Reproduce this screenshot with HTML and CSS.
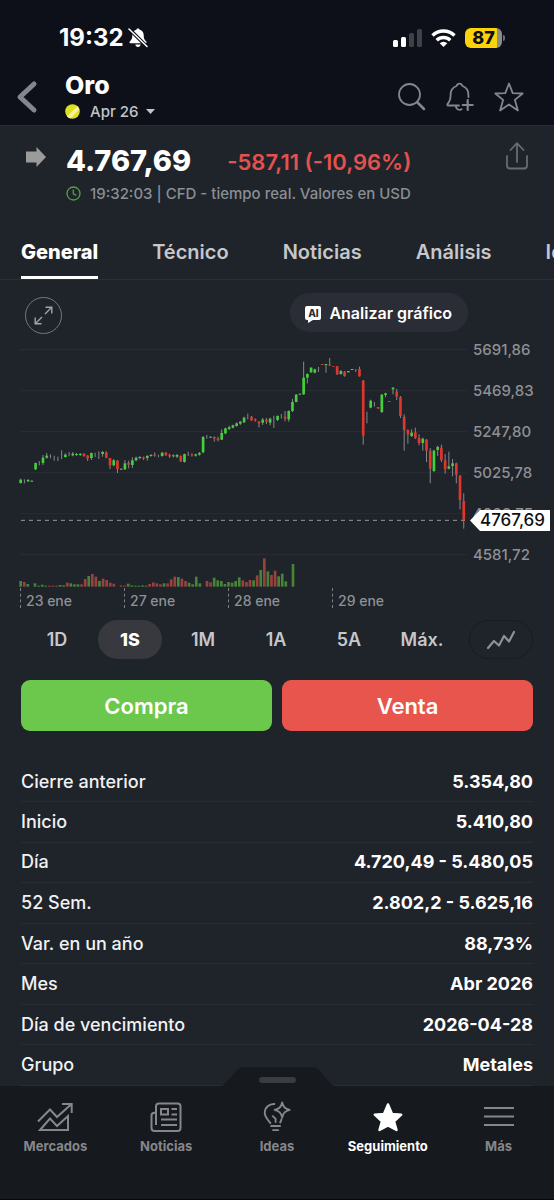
FILE: index.html
```html
<!DOCTYPE html>
<html lang="es">
<head>
<meta charset="utf-8">
<meta name="viewport" content="width=device-width, initial-scale=1">
<title>Oro</title>
<link rel="stylesheet" href="styles.css">
</head>
<body>
<div class="app">
  <div class="top">
    <div class="status">
      <div class="status-left">
        <span class="clock">19:32</span>
        <svg class="mute" viewBox="0 0 20 20" aria-hidden="true">
          <path fill="#fff" d="M10 .5c1 0 1.500 .6 1.700 1.300 2.700.8 4 2.900 4 5.400 0 3.600.8 4.600 2.500 6.300.6.700.3 1.800-.8 1.800H2.600c-1.100 0-1.400-1.100-.8-1.800 1.700-1.700 2.500-2.700 2.500-6.300 0-2.500 1.300-4.600 4-5.400C8.500 1.100 9 .5 10 .5zM7.300 16.500h5.400c-.2 1.500-1.300 2.400-2.700 2.400s-2.500-.9-2.700-2.400z"/>
          <path stroke="#0d1018" stroke-width="3.600" d="M1 .8l18 18"/>
          <path stroke="#fff" stroke-width="1.500" stroke-linecap="round" d="M1 1l18 17.500"/>
        </svg>
      </div>
      <div class="status-right">
        <svg class="signal" viewBox="0 0 29 18" aria-hidden="true">
          <rect x="0" y="11" width="5" height="7" rx="1.500" fill="#fff"/>
          <rect x="8" y="8" width="5" height="10" rx="1.500" fill="#fff"/>
          <rect x="16" y="4" width="5" height="14" rx="1.500" fill="#3e4147"/>
          <rect x="24" y="0" width="5" height="18" rx="1.500" fill="#3e4147"/>
        </svg>
        <svg class="wifi" viewBox="0 0 25 18" aria-hidden="true" fill="none" stroke="#fff" stroke-width="3.400">
          <path d="M1.500 6.500a15.700 15.700 0 0 1 22 0"/>
          <path d="M5.700 11.200a9.800 9.800 0 0 1 13.600 0"/>
          <path fill="#fff" stroke="none" d="M12.500 18l-3.800-3.700a5.400 5.400 0 0 1 7.600 0z"/>
        </svg>
        <span class="battery"><span class="battery-level">87</span></span>
      </div>
    </div>
    <header class="header">
      <button class="icon-btn back" aria-label="Atrás">
        <svg width="22" height="34" viewBox="0 0 22 34"><path d="M18 4L4 17l14 13" fill="none" stroke="#83868d" stroke-width="5" stroke-linecap="round" stroke-linejoin="round"/></svg>
      </button>
      <div class="title">
        <h1>Oro</h1>
        <button class="contract">
          <svg width="15" height="15" viewBox="0 0 15 15" aria-hidden="true">
            <circle cx="7.500" cy="7.500" r="7.300" fill="#dfe01f"/>
            <path d="M2 12.400L12.400 2.200a7.300 7.300 0 0 1 2 3.200L5.500 14.500A7.300 7.300 0 0 1 2 12.400z" fill="#f7f3a0"/>
          </svg>
          <span>Apr 26</span>
          <svg width="9" height="5" viewBox="0 0 9 5" aria-hidden="true"><path d="M0 0h9L4.500 5z" fill="#c3c5ca"/></svg>
        </button>
      </div>
      <div class="actions">
        <button class="icon-btn" aria-label="Buscar">
          <svg width="30" height="30" viewBox="0 0 30 30" class="line"><circle cx="12.500" cy="12.500" r="10.500"/><path d="M20.500 20.500l6.500 6.500" stroke-width="2.600"/></svg>
        </button>
        <button class="icon-btn" aria-label="Crear alerta">
          <svg width="30" height="30" viewBox="0 0 30 30" class="line"><path d="M14 23.500H3.200c-1 0-1.200-1-.6-1.700C4.700 19.600 5.600 17.800 5.600 13c0-4.600 2.200-7.800 5.900-9 .5-1.500 1.600-2.300 3-2.300s2.500.8 3 2.300c3.700 1.200 5.900 4.400 5.900 9 0 .7 0 1.300.1 2M10.800 24.200c.4 2.200 1.800 3.600 3.900 3.600.8 0 1.500-.2 2-.5"/><path d="M22.700 18v10M17.700 23h10" stroke-width="2.200"/></svg>
        </button>
        <button class="icon-btn" aria-label="Favorito">
          <svg width="32" height="32" viewBox="0 0 32 32" class="line"><path d="M16 2.500l3.700 9.600 10 .4-7.800 6.400 3 10.600L16 23.500l-8.900 6 3-10.600-7.800-6.400 10-.4z"/></svg>
        </button>
      </div>
    </header>
  </div>

  <main>
    <section class="quote">
      <svg class="trend" width="22" height="20" viewBox="0 0 22 20" aria-hidden="true"><path d="M1 4.500h10.500V0L21 10l-9.500 10v-4.500H1z" fill="#9b9b9b"/></svg>
      <div class="quote-body">
        <div class="quote-line"><strong class="price">4.767,69</strong><span class="change">-587,11 (-10,96%)</span></div>
        <div class="quote-meta">
          <svg width="15" height="15" viewBox="0 0 15 15" aria-hidden="true" fill="none" stroke="#56a044" stroke-width="1.300"><circle cx="7.500" cy="7.500" r="6.500"/><path d="M7.300 3.500v4.400l3 1.400"/></svg>
          <span>19:32:03 | CFD - tiempo real. Valores en USD</span>
        </div>
      </div>
      <button class="icon-btn share" aria-label="Compartir">
        <svg width="24" height="30" viewBox="0 0 24 30" fill="none" stroke="#686b71" stroke-width="1.800" stroke-linecap="round" stroke-linejoin="round"><path d="M12 21V2.500M5.500 9L12 2.200 18.500 9M2 15v9.500c0 2 1 3 3 3h14c2 0 3-1 3-3V15"/></svg>
      </button>
    </section>

    <nav class="tabs" aria-label="Secciones">
      <a href="#general" class="tab active" aria-current="page">General</a>
      <a href="#tecnico" class="tab">Técnico</a>
      <a href="#noticias" class="tab">Noticias</a>
      <a href="#analisis" class="tab">Análisis</a>
      <a href="#ideas" class="tab">Ideas</a>
    </nav>

    <section class="chart">
      <div class="chart-tools">
        <button class="expand" aria-label="Ampliar gráfico">
          <svg width="19" height="19" viewBox="0 0 19 19" fill="none" stroke="#a3a5a9" stroke-width="1.400"><path d="M11 8l6.500-6.500M11.500 1.200h6.300v6.300M8 11l-6.500 6.500M1.200 11.500v6.300h6.300"/></svg>
        </button>
        <button class="analyze">
          <span class="ai">AI</span>
          Analizar gráfico
        </button>
      </div>
      <div class="chart-area">
        <div class="plot">
          <svg class="candles" viewBox="0 0 1341 744" preserveAspectRatio="none" role="img" aria-label="Gráfico de velas de una semana">
            <path class="grid" d="M0 29H1341M0 152H1341M0 275H1341M0 398H1341M0 521H1341M0 644H1341"/>
            <g id="volume"></g>
            <path class="last-line" d="M3 541H1335"/>
            <g id="series"></g>
          </svg>
          <div class="dates"><span>23 ene</span><span>27 ene</span><span>28 ene</span><span>29 ene</span></div>
        </div>
        <div class="axis">
          <span>5691,86</span><span>5469,83</span><span>5247,80</span><span>5025,78</span><span>4803,75</span><span>4581,72</span>
          <div class="tag">4767,69</div>
        </div>
      </div>
      <div class="ranges">
        <div class="range-list">
          <button>1D</button><button class="on" aria-pressed="true">1S</button><button>1M</button><button>1A</button><button>5A</button><button>Máx.</button>
        </div>
        <button class="style-btn" aria-label="Tipo de gráfico">
          <svg width="30" height="20" viewBox="0 0 30 20"><path d="M2 18l6-7 5 4.500 5-9.500 5 5.500L28 2" fill="none" stroke="#8f9195" stroke-width="2.200" stroke-linecap="round" stroke-linejoin="round"/></svg>
        </button>
      </div>
    </section>

    <div class="trade"><button class="buy">Compra</button><button class="sell">Venta</button></div>

    <div class="details">
      <table>
        <tr><th scope="row">Cierre anterior</th><td>5.354,80</td></tr>
        <tr><th scope="row">Inicio</th><td>5.410,80</td></tr>
        <tr><th scope="row">Día</th><td>4.720,49 - 5.480,05</td></tr>
        <tr><th scope="row">52 Sem.</th><td>2.802,2 - 5.625,16</td></tr>
        <tr><th scope="row">Var. en un año</th><td>88,73%</td></tr>
        <tr><th scope="row">Mes</th><td>Abr 2026</td></tr>
        <tr><th scope="row">Día de vencimiento</th><td>2026-04-28</td></tr>
        <tr><th scope="row">Grupo</th><td>Metales</td></tr>
      </table>
    </div>
  </main>

  <nav class="bottom" aria-label="Principal">
    <svg class="bump" width="116" height="20" viewBox="0 0 116 20" aria-hidden="true"><path d="M0 20C6 18 12 8 16 4q4-4 9-4h66q5 0 9 4c4 4 10 14 16 16z" fill="#16191e"/><rect x="39" y="10" width="37" height="6" rx="3" fill="#3b3c41"/></svg>
    <a href="#mercados">
      <svg width="36" height="32" viewBox="0 0 36 32" class="nav-line"><path d="M1 20.500L13 8.500l7 7.500L34 3.500M25 3h9.700v9M3 29L13 17.500l7 7.500 11-10v14z"/></svg>
      Mercados
    </a>
    <a href="#noticias-app">
      <svg width="32" height="32" viewBox="0 0 32 32" class="nav-line"><path d="M6 24V5.500C6 3.500 7 2.500 9 2.500h18.500c2 0 3 1 3 3V27c0 2-1 3-3 3h-23c-2 0-3-1-3-3V14.500c0-2 1-2.700 3-2.700H6M11 8h7v5.500h-7zM21.500 8H27M21.500 13.500H27M11 18.500h16M11 24h16"/></svg>
      Noticias
    </a>
    <a href="#ideas-app">
      <svg width="32" height="34" viewBox="0 0 32 34" class="nav-line"><path d="M14 3.200C7.500 2.500 3 7 3 12.500c0 5 3.500 7.500 6.500 11.500M21 18.500c-.2 2-1 3.500-2 5M9 26.500h11M11 31h7M11 15.500l3.500 3.500v4"/><path stroke-linejoin="round" d="M21.500 1.500c1.300 5 3 6.700 8 8-5 1.300-6.700 3-8 8-1.300-5-3-6.700-8-8 5-1.300 6.700-3 8-8z"/></svg>
      Ideas
    </a>
    <a href="#seguimiento" class="current" aria-current="page">
      <svg width="32" height="32" viewBox="0 0 32 32"><path d="M16 3.500l4 9.500 9.200.7-7.200 6.600 2.500 8.700L16 24.300 7.500 29l2.500-8.700-7.200-6.600L12 13z" fill="#fff" stroke="#fff" stroke-width="2.500" stroke-linejoin="round"/></svg>
      Seguimiento
    </a>
    <a href="#mas">
      <svg width="30" height="32" viewBox="0 0 30 32" class="nav-line"><path d="M0 7h30M0 15.500h30M0 24h30"/></svg>
      Más
    </a>
  </nav>
</div>
<script src="chart.js"></script>
</body>
</html>
```
FILE: chart.js
```js
// Each candle: direction (g up, r down, n flat), body top, body bottom, wick top, wick bottom.
const candles = `g 419 429 416 431|n 0 0 418 430|g 420 424 417 426|n 422 425 422 425|g 369 388 368 390|n 0 0 363 376|g 353 369 345 375|g 347 353 339 356|n 0 0 343 355|n 0 0 347 362
n 0 0 350 363|n 0 0 331 357|g 344 351 340 353|n 0 0 336 349|g 341 346 336 349|g 342 345 339 348|g 342 345 339 348|r 341 349 340 349|r 347 355 345 363|g 339 354 338 360
n 0 0 338 351|n 0 0 334 357|g 336 342 333 350|r 337 353 334 355|r 354 376 354 387|g 361 376 357 379|r 362 387 360 399|n 386 389 386 389|g 370 388 360 390|r 368 374 362 385
g 361 375 352 384|g 353 361 350 364|g 351 354 348 358|r 352 356 350 360|g 348 354 345 362|g 345 348 342 350|r 344 347 337 350|n 0 0 344 352|g 338 348 337 350|r 338 345 336 348
r 344 349 341 354|g 346 349 343 352|g 345 350 342 354|r 348 364 346 366|g 342 366 341 368|n 0 0 335 348|r 343 346 340 350|g 343 347 341 350|g 339 344 336 347|g 291 337 288 340
n 0 0 285 296|n 290 293 290 293|r 291 296 289 305|r 295 300 290 304|g 279 299 268 300|g 265 280 263 283|g 262 267 257 270|g 256 263 254 265|g 250 258 247 260|g 245 251 243 255
g 233 247 230 249|n 0 0 221 238|r 230 241 228 243|r 238 242 235 245|r 245 250 243 262|g 239 248 234 255|r 239 245 234 252|g 236 248 233 256|n 0 0 227 264|g 228 240 226 243
n 0 0 222 236|r 230 236 213 244|g 213 238 211 245|g 186 213 177 216|g 164 186 162 187|g 161 164 161 164|g 113 163 65 165|g 102 113 100 130|g 83 97 82 98|g 88 98 86 100
n 0 0 81 96|r 72 75 72 75|g 72 75 72 98|r 74 77 54 77|r 79 81 79 81|r 79 103 78 105|g 93 102 90 104|r 95 108 93 110|g 93 97 93 97|n 87 90 87 90
n 0 0 87 96|r 87 109 80 110|r 122 287 120 314|n 0 0 215 250|g 182 203 179 205|n 0 0 186 200|r 201 206 201 206|g 164 216 162 219|g 160 165 158 172|r 183 186 183 186
g 143 148 142 163|r 155 170 147 180|r 171 228 168 234|r 230 270 223 332|r 270 283 268 311|g 278 288 268 291|r 277 294 263 297|r 294 309 283 316|g 296 309 293 332|r 299 332 297 366
r 332 386 324 430|g 332 393 329 396|g 321 330 317 348|r 323 360 314 366|r 361 387 342 401|g 379 386 335 388|g 370 378 357 409|r 370 404 368 430|r 407 480 405 508|r 483 541 460 566`;

const volumes = `g17 r14 g8 g0 g10 g3 g6 g3 r3 r3 r3 g5 g4 r12 g10 g7 g7 r7 r23 g32 r38 r30 g17 r24 r20 r12 r9 g0 r4 r3
g9 g4 g3 g3 g4 g3 r8 r13 r10 r7 g10 r10 r22 r30 g29 r24 r17 g12 g7 g30 g10 g0 r17 r13 g27 g19 g17 g8 g14 g12
g17 g28 r19 r14 r20 g19 r34 g50 r85 g46 r35 r48 g31 g39 g16 g0 g68`;

const CANDLE_STEP = 11.17;
const VOLUME_STEP = 10.75;
const BASELINE = 740;
const colors = { g: "#45cf3b", r: "#e0372d", n: "#9a9ba0" };
const volumeColors = { g: "#478438", r: "#98413f" };

function rect(parent, x, y, width, height, fill) {
  const el = document.createElementNS("http://www.w3.org/2000/svg", "rect");
  Object.entries({ x, y, width, height, fill }).forEach(([k, v]) => el.setAttribute(k, v));
  parent.append(el);
}

const series = document.getElementById("series");
candles.split(/[|\n]/).forEach((row, i) => {
  const [dir, ...values] = row.split(" ");
  const [top, bottom, high, low] = values.map(Number);
  const x = 2 + i * CANDLE_STEP;
  rect(series, x - 1.5, high, 3, low - high, "#85878b");
  if (bottom) rect(series, x - 4, top, 8, bottom - top, colors[dir]);
});

const volume = document.getElementById("volume");
volumes.split(/\s+/).forEach((item, i) => {
  const height = Number(item.slice(1));
  rect(volume, i * VOLUME_STEP - 2, BASELINE - height, 8, height, volumeColors[item[0]]);
});
```
FILE: styles.css
```css
* { box-sizing: border-box; }

body {
  margin: 0;
  background: #1f232a;
  color: #fff;
  font-family: Inter, "Liberation Sans", sans-serif;
}

button {
  border: 0;
  padding: 0;
  background: none;
  color: inherit;
  font: inherit;
}

a { color: inherit; text-decoration: none; }
svg { display: block; flex: none; }

.app {
  display: flex;
  flex-direction: column;
  min-height: 100vh;
}

.top {
  background: #0d1018;
  border-bottom: 1px solid #282c32;
}

.status {
  display: flex;
  justify-content: space-between;
  align-items: center;
  height: 71px;
  padding: 4px 52px 0 59px;
}

.status-left, .status-right { display: flex; align-items: center; }
.status-left { gap: 4px; }
.status-right { gap: 9px; }
.clock { font-size: 24px; font-weight: 700; }
.mute { width: 20px; height: 20px; }
.signal { width: 29px; height: 18px; }
.wifi { width: 25px; height: 18px; }

.battery {
  position: relative;
  width: 37px;
  height: 20px;
  border-radius: 6px;
  background: linear-gradient(90deg, #fcd20b 87%, #8b8b8b 87%);
  color: #0d1018;
  text-align: center;
}

.battery::after {
  content: "";
  position: absolute;
  left: 100%;
  top: 7px;
  width: 2px;
  height: 6px;
  margin-left: 1px;
  border-radius: 0 2px 2px 0;
  background: #6c6e73;
}

.battery-level {
  display: block;
  font-size: 18px;
  font-weight: 800;
  line-height: 20px;
}

.header {
  display: flex;
  align-items: center;
  height: 54px;
  padding: 0 29px 3px 16px;
}

.icon-btn { display: grid; place-items: center; }
.title { flex: 1; padding-left: 27px; }
.title h1 { margin: 0; font-size: 25px; font-weight: 800; line-height: 30px; }

.contract {
  display: flex;
  align-items: center;
  gap: 8px;
  height: 23px;
  color: #c3c5ca;
  font-size: 15px;
  font-weight: 500;
}

.contract span { padding-left: 2px; }
.actions { display: flex; align-items: center; gap: 18px; }

.line {
  fill: none;
  stroke: #83868d;
  stroke-width: 1.8;
  stroke-linecap: round;
  stroke-linejoin: round;
}

.quote {
  display: flex;
  align-items: flex-start;
  padding: 15px 25px 0;
  height: 96px;
}

.trend { margin-top: 6px; }
.quote-body { flex: 1; padding-left: 19px; }
.quote-line { display: flex; align-items: center; gap: 36px; height: 38px; }
.price { font-size: 29px; font-weight: 800; }
.change { padding-top: 4px; color: #e2524e; font-size: 22px; font-weight: 600; }

.quote-meta {
  display: flex;
  align-items: center;
  gap: 9px;
  height: 28px;
  color: #8b8e93;
  font-size: 15px;
  font-weight: 500;
}

.tabs {
  display: flex;
  gap: 54px;
  height: 58px;
  padding-left: 21px;
  overflow: hidden;
  border-bottom: 1px solid #2b2f36;
}

.tab {
  border-bottom: 3px solid transparent;
  color: #c5c7cb;
  font-size: 20px;
  font-weight: 600;
  line-height: 60px;
}

.tab.active { border-color: #fff; color: #fff; font-weight: 800; }

.chart-tools {
  display: flex;
  justify-content: space-between;
  align-items: center;
  height: 60px;
  padding: 10px 86px 0 25px;
}

.expand {
  display: grid;
  place-items: center;
  width: 37px;
  height: 37px;
  border: 1px solid #75777c;
  border-radius: 50%;
}

.analyze {
  display: flex;
  align-items: center;
  gap: 8px;
  height: 39px;
  margin-bottom: 5px;
  padding: 0 16px 0 15px;
  border-radius: 20px;
  background: #2b2d36;
  font-size: 16px;
  font-weight: 600;
}

.ai {
  position: relative;
  width: 16px;
  height: 14px;
  border-radius: 2px;
  background: #fff;
  color: #2b2d36;
  font-size: 10px;
  font-weight: 800;
  line-height: 14px;
  text-align: center;
}

.ai::after {
  content: "";
  position: absolute;
  left: 3px;
  top: 100%;
  border-top: 3px solid #fff;
  border-right: 5px solid transparent;
}

.chart-area { display: flex; padding-left: 20px; }
.plot { flex: 1; min-width: 0; }
.candles { width: 100%; height: 248px; overflow: visible; }

.grid { fill: none; stroke: #2b2f35; stroke-width: 1px; vector-effect: non-scaling-stroke; }

.last-line {
  stroke: #9a9ba0;
  stroke-width: 1px;
  stroke-dasharray: 4 4;
  vector-effect: non-scaling-stroke;
}

.dates { display: flex; }

.dates span {
  flex: 0 0 104px;
  height: 20px;
  padding-left: 5px;
  border-left: 1px dashed #7d7f84;
  color: #8e9095;
  font-size: 14px;
  font-weight: 500;
  line-height: 25px;
}

.axis {
  position: relative;
  display: flex;
  flex-direction: column;
  width: 87px;
  height: 248px;
  margin-top: -11px;
  padding-left: 6px;
}

.axis span {
  flex: 0 0 41px;
  color: #8e9095;
  font-size: 15px;
  font-weight: 500;
  line-height: 41px;
}

.tag {
  position: absolute;
  top: 181px;
  left: 3px;
  width: 80px;
  height: 21px;
  padding-left: 10px;
  background: #fff;
  clip-path: polygon(0 50%, 10px 0, 100% 0, 100% 100%, 10px 100%);
  color: #111;
  font-size: 17px;
  font-weight: 500;
  line-height: 21px;
}

.ranges {
  display: flex;
  align-items: center;
  justify-content: space-between;
  gap: 15px;
  padding: 12px 21px 0 25px;
}

.range-list { display: flex; flex: 1; gap: 9px; }

.range-list button {
  flex: 1;
  height: 39px;
  border-radius: 20px;
  color: #c5c7cb;
  font-size: 18px;
  font-weight: 600;
}

.range-list .on { background: #38393e; color: #fff; font-weight: 800; }

.style-btn {
  display: grid;
  place-items: center;
  width: 64px;
  height: 39px;
  border: 1px solid #191c22;
  border-radius: 20px;
}

.trade { display: flex; gap: 10px; padding: 21px 21px 0; }

.trade button {
  flex: 1;
  height: 51px;
  border-radius: 9px;
  font-size: 22px;
  font-weight: 600;
}

.buy { background: #6bc84d; }
.sell { background: #e7554d; }

.details { padding: 31px 21px 0; }
.details table { width: 100%; height: 324px; border-collapse: collapse; }
.details tr { border-bottom: 1px solid #282c33; }

.details th, .details td {
  padding: 0;
  font-size: 18px;
  line-height: 22px;
}

.details th { color: #f0f1f3; font-weight: 500; text-align: left; }
.details td { font-weight: 700; text-align: right; }

.bottom {
  position: relative;
  display: grid;
  grid-template-columns: repeat(5, 1fr);
  min-height: 114px;
  margin-top: auto;
  padding-top: 15px;
  background: #16191e;
  border-bottom: 1px solid #050608;
}

.bump {
  position: absolute;
  bottom: 100%;
  left: 50%;
  margin: 0 0 -1px -57px;
}

.bottom a {
  display: flex;
  flex-direction: column;
  align-items: center;
  color: #85878b;
  font-size: 13px;
  font-weight: 700;
  line-height: 16px;
}

.bottom a svg { height: 32px; margin-bottom: 5px; }
.bottom .current { color: #fff; }
.nav-line { fill: none; stroke: #85878b; stroke-width: 2; }
```
